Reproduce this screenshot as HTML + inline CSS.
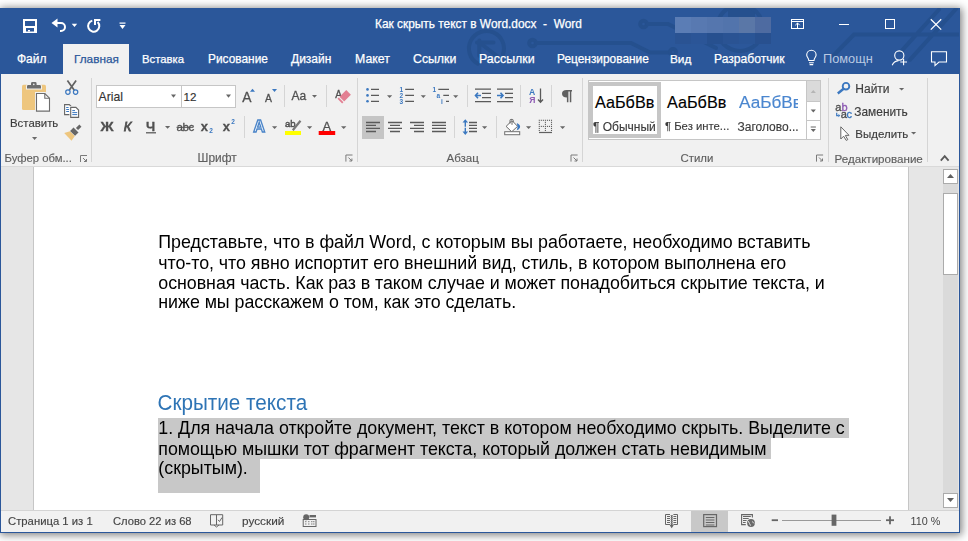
<!DOCTYPE html>
<html><head><meta charset="utf-8">
<style>
*{margin:0;padding:0;box-sizing:border-box}
html,body{width:968px;height:541px;overflow:hidden;background:#fff;font-family:"Liberation Sans",sans-serif;position:relative}
.a{position:absolute}
.t{position:absolute;white-space:nowrap;line-height:1}
.tab{position:absolute;color:#fff;font-size:12px;white-space:nowrap;line-height:1;top:53px;-webkit-text-stroke:0.25px currentColor}
.sep{position:absolute;width:1px;background:#d5d5d5}
.gl{position:absolute;font-size:11.5px;color:#5e5e5e;-webkit-text-stroke:0.15px currentColor;white-space:nowrap;line-height:1;top:153px}
.rb{position:absolute;font-size:11.8px;color:#3c3c3c;-webkit-text-stroke:0.15px currentColor;white-space:nowrap;line-height:1}
.st{position:absolute;font-size:11.2px;color:#444;-webkit-text-stroke:0.15px currentColor;white-space:nowrap;line-height:1;top:516px}
.doc{position:absolute;font-size:17.84px;color:#000;white-space:nowrap;line-height:1}
svg{position:absolute;left:0;top:0}
</style></head><body><div id="root" style="position:absolute;left:0;top:0;width:968px;height:541px;filter:opacity(1)">
<!-- window shadow & frame -->
<div class="a" style="left:0;top:8px;width:960px;height:525px;background:#f1f1f1;box-shadow:1px 1px 8px 1px rgba(0,0,0,.5)"></div>
<!-- title bar + tabs -->
<div class="a" style="left:0;top:8px;width:960px;height:66px;background:#2b579a;overflow:hidden">
  <svg width="960" height="66" viewBox="0 8 960 66">
    <g fill="none" stroke="#25508e" stroke-width="4" stroke-linecap="round">
      <path d="M477.75 63.7 A17.5 17.5 0 1 1 502.9 54.5"/>
      <path d="M479.3 42.5 L497 56 M479.3 40.6 V55.8 M477 42.5 H493.5"/>
      <circle cx="532.5" cy="43" r="3.3"/>
      <path d="M536 43 H631 L650 52.5 H670"/>
      <circle cx="673" cy="52" r="3"/>
      <circle cx="643.5" cy="24" r="3.3"/>
      <path d="M647 24 H668 L716 48"/>
      <rect x="728" y="8" width="27" height="9" fill="#25508e" stroke="none"/>
      <circle cx="740" cy="28" r="23"/>
      <path d="M833 56 L854 34.5 H960 M900.7 51.9 L939 9.5 M909.9 59.8 L956 9"/>
    </g>
  </svg>
</div>
<div class="a" style="left:675px;top:17px;width:16px;height:16px;background:#5b7db5"></div><div class="a" style="left:675px;top:33px;width:16px;height:11px;background:#2a5393"></div><div class="a" style="left:691px;top:17px;width:16px;height:16px;background:#5879b1"></div><div class="a" style="left:691px;top:33px;width:16px;height:11px;background:#2b5597"></div><div class="a" style="left:707px;top:17px;width:16px;height:16px;background:#5576ae"></div><div class="a" style="left:707px;top:33px;width:16px;height:11px;background:#27508f"></div><div class="a" style="left:723px;top:17px;width:16px;height:16px;background:#5274ac"></div><div class="a" style="left:723px;top:33px;width:16px;height:11px;background:#2a5393"></div><div class="a" style="left:739px;top:17px;width:16px;height:16px;background:#5a77a7"></div><div class="a" style="left:739px;top:33px;width:16px;height:11px;background:#2a5596"></div><div class="a" style="left:755px;top:17px;width:16px;height:16px;background:#4e6ba1"></div><div class="a" style="left:755px;top:33px;width:16px;height:11px;background:#28508f"></div>
<!-- active tab -->
<div class="a" style="left:63px;top:44px;width:66px;height:30px;background:#f1f1f1"></div>
<!-- title -->
<div class="t" style="left:375px;top:19px;font-size:11.9px;color:#fff;-webkit-text-stroke:0.25px #fff">Как скрыть текст в Word.docx&nbsp; -&nbsp; Word</div>
<!-- tabs -->
<div class="tab" style="left:17px">Файл</div>
<div class="tab" style="top:53.6px;left:74px;color:#2b579a;font-size:11.8px">Главная</div>
<div class="tab" style="top:53.6px;left:142px;font-size:11.3px">Вставка</div>
<div class="tab" style="top:53.6px;left:208px;font-size:11.9px">Рисование</div>
<div class="tab" style="left:291px">Дизайн</div>
<div class="tab" style="left:355px;font-size:12.3px">Макет</div>
<div class="tab" style="left:413px;font-size:12.3px">Ссылки</div>
<div class="tab" style="left:479px;font-size:12.4px">Рассылки</div>
<div class="tab" style="top:53.6px;left:557px;font-size:11.9px">Рецензирование</div>
<div class="tab" style="top:53.6px;left:670px;font-size:11.8px">Вид</div>
<div class="tab" style="left:714px;font-size:12.1px">Разработчик</div>
<div class="tab" style="left:823px;color:#b9c9e2;font-size:12.8px;-webkit-text-stroke:0">Помощн</div>

<!-- ribbon bottom border -->
<div class="a" style="left:1px;top:166px;width:958px;height:1px;background:#d9d9d9"></div>
<!-- doc area -->
<div class="a" style="left:1px;top:167px;width:958px;height:343px;background:#e6e6e6"></div>
<div class="a" style="left:33px;top:167px;width:876px;height:343px;background:#fff;border-left:1px solid #c6c6c6;border-right:1px solid #c6c6c6"></div>
<!-- scrollbar -->
<div class="a" style="left:943px;top:184px;width:15px;height:309px;background:#dadada"></div>
<div class="a" style="left:943px;top:169px;width:15px;height:15px;background:#fff;border:1px solid #ababab"></div>
<div class="a" style="left:943px;top:193px;width:15px;height:82px;background:#fff;border:1px solid #ababab"></div>
<div class="a" style="left:943px;top:493px;width:15px;height:15px;background:#fff;border:1px solid #ababab"></div>
<!-- status bar -->
<div class="a" style="left:1px;top:510px;width:958px;height:1px;background:#d4d4d4"></div>
<div class="a" style="left:691px;top:511px;width:37px;height:21px;background:#c8c8c8"></div>
<!-- window blue border -->
<div class="a" style="left:0;top:8px;width:960px;height:525px;border:1px solid #2b579a;border-top:0"></div>
<!-- ribbon separators -->
<div class="sep" style="left:91px;top:78px;height:84px"></div>
<div class="sep" style="left:357px;top:78px;height:84px"></div>
<div class="sep" style="left:582px;top:78px;height:84px"></div>
<div class="sep" style="left:828px;top:78px;height:84px"></div>
<div class="sep" style="left:927px;top:78px;height:84px"></div>
<div class="sep" style="left:284px;top:85px;height:22px"></div>
<div class="sep" style="left:326px;top:85px;height:22px"></div>
<div class="sep" style="left:244px;top:116px;height:22px"></div>
<div class="sep" style="left:467px;top:85px;height:22px"></div>
<div class="sep" style="left:520px;top:85px;height:22px"></div>
<div class="sep" style="left:551px;top:85px;height:22px"></div>
<div class="sep" style="left:454px;top:116px;height:22px"></div>
<div class="sep" style="left:496px;top:116px;height:22px"></div>
<!-- font boxes -->
<div class="a" style="left:96px;top:85px;width:86px;height:23px;background:#fff;border:1px solid #c6c6c6"></div>
<div class="a" style="left:181px;top:85px;width:55px;height:23px;background:#fff;border:1px solid #c6c6c6"></div>
<div class="rb" style="left:98.5px;top:91px;font-size:12.2px;color:#333">Arial</div>
<div class="rb" style="left:183.5px;top:91px;font-size:11.6px;color:#333">12</div>
<!-- align left active -->
<div class="a" style="left:362px;top:116px;width:22px;height:23px;background:#c5c5c5"></div>
<!-- styles gallery -->
<div class="a" style="left:588px;top:80px;width:233px;height:60px;background:#fff;border:1px solid #c6c6c6"></div>
<div class="a" style="left:589px;top:82px;width:72px;height:56px;border:4px solid #c6c6c6"></div>
<div class="a" style="left:807px;top:81px;width:13px;height:20px;background:#dadada"></div>
<div class="a" style="left:806px;top:80px;width:1px;height:60px;background:#c6c6c6"></div>
<div class="a" style="left:806px;top:101px;width:15px;height:1px;background:#c6c6c6"></div>
<div class="a" style="left:806px;top:120px;width:15px;height:1px;background:#c6c6c6"></div>
<div class="rb" style="left:595px;top:93.8px;font-size:16.2px;color:#000">АаБбВв</div>
<div class="rb" style="left:667px;top:93.8px;font-size:16.2px;color:#000">АаБбВв</div>
<div class="a" style="left:739px;top:90px;width:59px;height:24px;overflow:hidden"><div class="rb" style="left:0;top:4px;font-size:17.2px;color:#4a86cf">АаБбВв</div></div>
<div class="rb" style="left:593px;top:121px;font-size:12px">¶ Обычный</div>
<div class="rb" style="left:665px;top:121px;font-size:11.3px">¶ Без инте...</div>
<div class="rb" style="left:737.5px;top:121px;font-size:12px">Заголово...</div>
<!-- labels -->
<div class="rb" style="left:10px;top:117.5px;font-size:11.4px">Вставить</div>
<div class="gl" style="left:4.5px;font-size:11.3px">Буфер обм...</div>
<div class="gl" style="left:197.5px;font-size:11.9px">Шрифт</div>
<div class="gl" style="left:446.5px;font-size:11.5px">Абзац</div>
<div class="gl" style="left:680.5px;font-size:11.4px">Стили</div>
<div class="gl" style="left:834.5px;font-size:11.6px">Редактирование</div>
<div class="rb" style="left:855.3px;top:83.3px;font-size:12px">Найти</div>
<div class="rb" style="left:854.3px;top:107px;font-size:11.9px">Заменить</div>
<div class="rb" style="left:855.3px;top:128.8px;font-size:11.5px">Выделить</div>
<!-- status bar text -->
<div class="st" style="left:8px;font-size:11.3px">Страница 1 из 1</div>
<div class="st" style="left:113px;font-size:11.2px">Слово 22 из 68</div>
<div class="st" style="left:242px;font-size:11.8px">русский</div>
<div class="st" style="left:910.5px;font-size:10.8px;-webkit-text-stroke:0">110 %</div>
<svg width="968" height="541" viewBox="0 0 968 541">
<!-- ===== title bar icons ===== -->
<g fill="#fff">
  <rect x="23" y="19" width="14" height="14"/>
</g>
<g fill="#2b579a">
  <rect x="25" y="21" width="10" height="5"/>
  <rect x="26" y="28" width="8" height="3.5"/>
</g>
<rect x="28" y="30" width="2" height="1.5" fill="#fff"/>
<g fill="none" stroke="#fff" stroke-width="2">
  <path d="M55 23 H61 A4 4 0 0 1 61 31 H60"/>
  <path d="M92.3 20.6 A5.6 5.6 0 1 0 97.6 22"/>
</g>
<g fill="#fff">
  <path d="M51.5 23 L57.5 18.6 V27.4 Z"/>
  <path d="M71.7 23.8 H77.2 L74.45 27 Z"/>
  <path d="M94 18.9 H100.4 V20.9 H96 V25 H94 Z"/>
  <rect x="119.5" y="22.5" width="6" height="1.2"/>
  <path d="M119.5 25 H125.5 L122.5 29 Z"/>
</g>
<g fill="none" stroke="#fff" stroke-width="1">
  <rect x="791.5" y="19.5" width="12" height="9"/>
  <path d="M791.5 21.5 H803.5 M797.5 28.5 V23 M795.3 25.2 L797.5 23 L799.7 25.2"/>
  <path d="M839 24.5 H849"/>
  <rect x="885.5" y="19.5" width="9" height="9"/>
  <path d="M930.8 19.2 L941.2 29.6 M941.2 19.2 L930.8 29.6" stroke-width="1.25"/>
</g>
<!-- tab row icons -->
<g fill="none" stroke="#fff" stroke-width="1.1">
  <path d="M808.8 60.5 C808.8 58 806.7 57 806.7 55 A4.7 4.7 0 0 1 816.1 55 C816.1 57 814 58 814 60.5 Z"/>
  <path d="M809 62.7 H813.8 M809.6 64.6 H813.2"/>
  <circle cx="899.3" cy="55.5" r="4.6"/>
  <path d="M892.2 65.3 A7.5 7.5 0 0 1 898.5 60.6"/>
  <path d="M903.6 58.8 V65.2 M900.3 62 H907"/>
  <path d="M931.5 51.8 H946.5 V62 H939 L935 65.6 V62 H931.5 Z"/>
</g>
<!-- ===== clipboard group ===== -->
<rect x="22" y="84.7" width="24" height="25.3" rx="1.6" fill="#eec67e"/>
<path d="M27 88.6 V86.3 Q27 85 28.3 85 H31 V83.5 Q31 82.1 32.4 82.1 H35.2 Q36.6 82.1 36.6 83.5 V85 H39.7 Q41 85 41 86.3 V88.6 Z" fill="#f1f1f1" stroke="#f1f1f1" stroke-width="2"/>
<path d="M27 88.6 V86.3 Q27 85 28.3 85 H31 V83.5 Q31 82.1 32.4 82.1 H35.2 Q36.6 82.1 36.6 83.5 V85 H39.7 Q41 85 41 86.3 V88.6 Z" fill="#6d6d6d"/>
<circle cx="33.8" cy="84.4" r="0.8" fill="#f1f1f1"/>
<path d="M36.5 93.5 H44.8 L49.5 98.2 V111.1 H36.5 Z" fill="#fff" stroke="#f1f1f1" stroke-width="3"/>
<path d="M36.5 93.5 H44.8 L49.5 98.2 V111.1 H36.5 Z" fill="#fff" stroke="#6d6d6d" stroke-width="1.1"/>
<path d="M44.8 93.5 V98.2 H49.5" fill="none" stroke="#6d6d6d" stroke-width="1.1"/>
<path d="M32 137 H37.2 L34.6 140 Z" fill="#6a6a6a"/>
<g stroke="#626262" stroke-width="1.7" fill="none">
  <path d="M67.4 80.5 L74.3 90.3 M76.1 80.5 L69.2 90.3"/>
</g>
<g stroke="#3b78c0" stroke-width="1.2" fill="none">
  <circle cx="67.9" cy="92.1" r="2.2"/>
  <circle cx="75.6" cy="92.1" r="2.2"/>
</g>
<g stroke="#666" stroke-width="1.1" fill="#fff">
  <path d="M64.6 104.6 H69.3 L71.5 106.8 V114.6 H64.6 Z"/>
</g>
<path d="M70.7 107.4 H75.9 L78.6 110.1 V117.4 H70.7 Z" fill="#fff" stroke="#f1f1f1" stroke-width="2.6"/>
<path d="M70.7 107.4 H75.9 L78.6 110.1 V117.4 H70.7 Z" fill="#fff" stroke="#666" stroke-width="1.1"/>
<g stroke="#3b78c0" stroke-width="1">
  <path d="M66.2 107.5 H68.6 M66.2 109.5 H69 M66.2 111.5 H69 M72.3 110.6 H75 M72.3 112.6 H77.2 M72.3 114.6 H77.2"/>
</g>
<path d="M64.2 133 L70.8 131 L75.2 135.4 L71.5 140.8 Z" fill="#eec67e"/>
<path d="M78.47 132.48 L73.52 127.53 L70.13 130.92 L75.08 135.87 Z" fill="#666" stroke="#f1f1f1" stroke-width="1"/>
<path d="M78.47 132.48 L73.52 127.53 L70.13 130.92 L75.08 135.87 Z" fill="#666"/>
<path d="M77 129 L80.4 125.6" stroke="#666" stroke-width="3"/>
<!-- launchers -->
<g fill="none" stroke="#7a7a7a" stroke-width="1">
  <path d="M80.5 162 V155.5 H87 M83 158 L86.5 161.5 M86.5 159 V161.5 H84"/>
  <path d="M345.9 161.6 V155 H352.5 M348.4 157.5 L351.9 161 M351.9 158.5 V161 H349.4"/>
  <path d="M571 161.6 V155 H577.6 M573.5 157.5 L577 161 M577 158.5 V161 H574.5"/>
  <path d="M816.5 161.6 V155 H823.1 M819 157.5 L822.5 161 M822.5 158.5 V161 H820"/>
</g>
<path d="M940.8 160.6 L944.7 156.2 L948.6 160.6" fill="none" stroke="#5a5a5a" stroke-width="1.8"/>
<!-- ===== font group ===== -->
<g fill="#676767">
  <path d="M171 94.5 H176 L173.5 97.8 Z"/>
  <path d="M226 94.5 H231 L228.5 97.8 Z"/>
  <path d="M312 95 H317 L314.5 97.8 Z"/>
  <path d="M165 126 H170.2 L167.6 128.8 Z"/>
  <path d="M272 126.2 H277.2 L274.6 129 Z"/>
  <path d="M307 126.2 H312.2 L309.6 129 Z"/>
  <path d="M341 126.2 H346.4 L343.7 129 Z"/>
</g>
<g font-family="Liberation Sans" fill="#505050" stroke="#505050" stroke-width="0.3">
  <text x="242.2" y="101.7" font-size="13.8">A</text>
  <text x="265" y="101.7" font-size="10.4">A</text>
  <text x="291.5" y="99.8" font-size="12" >Aa</text>
  <text x="335.2" y="98" font-size="10">A</text>
  <text x="100.6" y="131.4" font-size="13.4" font-weight="bold" transform="translate(100.6 0) scale(1.08 1) translate(-100.6 0)">Ж</text>
  <text x="123.8" y="131.4" font-size="13" font-style="italic" stroke-width="0.8">К</text>
  <text x="146" y="131.4" font-size="13" font-weight="bold">Ч</text>
  <text x="176.6" y="131" font-size="11.6" letter-spacing="-0.5">abc</text>
  <text x="200.8" y="131" font-size="13" font-weight="bold">x</text>
  <text x="222.8" y="131" font-size="13" font-weight="bold">x</text>
  <text x="285" y="126.5" font-size="9.5" stroke-width="0.5">ab</text>
  <text x="322.4" y="130.6" font-size="13">A</text>
</g>
<path d="M146 132.8 H156" stroke="#505050" stroke-width="1.2"/>
<path d="M176.5 127.3 H193.5" stroke="#505050" stroke-width="1"/>
<g fill="#3b78c0">
  <path d="M250 91.8 H255 L252.5 88.7 Z"/>
  <path d="M272 89 H277 L274.5 92.1 Z"/>
</g>
<g font-family="Liberation Sans" fill="#3b78c0" font-weight="bold">
  <text x="209.3" y="133.3" font-size="6.5">2</text>
  <text x="231.3" y="124" font-size="6.5">2</text>
</g>
<text x="253.2" y="132.3" font-family="Liberation Sans" font-size="16.5" font-weight="bold" fill="#f4f8fc" stroke="#4a84c8" stroke-width="1.3">A</text>
<path d="M350.9 94.75 L346.25 90.1 L337.5 98.85 L342.15 103.5 Z" fill="#e37f92"/>
<path d="M338.9 96.9 L344.1 102.1" stroke="#f1f1f1" stroke-width="1.1"/>
<path d="M292.8 130.2 L300.5 120.8" stroke="#777" stroke-width="2.2"/>
<rect x="285" y="131" width="16" height="4" fill="#ffff00"/>
<rect x="318.7" y="131" width="16.5" height="4" fill="#ff0000"/>
<!-- ===== paragraph group ===== -->
<g fill="#676767">
  <path d="M387 95.2 H392.2 L389.6 98 Z"/>
  <path d="M420.7 95.2 H425.9 L423.3 98 Z"/>
  <path d="M453.1 95.2 H458.3 L455.7 98 Z"/>
  <path d="M482 126.3 H487.2 L484.6 129 Z"/>
  <path d="M526 126.3 H531.2 L528.6 129 Z"/>
  <path d="M560 126.3 H565.2 L562.6 129 Z"/>
</g>
<g fill="#3b78c0">
  <circle cx="367.5" cy="89.4" r="1.3"/>
  <circle cx="367.5" cy="95.4" r="1.3"/>
  <circle cx="367.5" cy="101.3" r="1.3"/>
</g>
<g stroke="#5a5a5a" stroke-width="1.3">
  <path d="M371 89.4 H379 M371 95.4 H379 M371 101.3 H379"/>
  <path d="M405.2 89.4 H414 M405.2 95.4 H414 M405.2 101.3 H414"/>
  <path d="M438.3 89.4 H449 M443.3 95.4 H449 M446 101.3 H449"/>
  <path d="M475 89.2 H491 M482 93.4 H491 M482 97.6 H491 M475 101.6 H491"/>
  <path d="M497 89.2 H513 M505 93.4 H513 M505 97.6 H513 M497 101.6 H513"/>
  <path d="M540.5 88.5 V102 M538 99.5 L540.5 102.2 L543 99.5" fill="none"/>
  <path d="M366 122.5 H380 M366 125.4 H376 M366 128.4 H380 M366 131.5 H376"/>
  <path d="M388 122.5 H402 M390 125.4 H400 M388 128.4 H402 M390 131.5 H400"/>
  <path d="M410 122.5 H424 M414 125.4 H424 M410 128.4 H424 M414 131.5 H424"/>
  <path d="M432 122.5 H446 M432 125.4 H446 M432 128.4 H446 M432 131.5 H446"/>
  <path d="M469 122.5 H477 M469 125.3 H477 M469 128.4 H477 M469 131.5 H477"/>
</g>
<g font-family="Liberation Sans" font-weight="bold" fill="#3b78c0" font-size="6.5">
  <text x="399.5" y="92">1</text>
  <text x="399.5" y="98">2</text>
  <text x="399.5" y="104">3</text>
  <text x="432.5" y="92">1</text>
  <text x="436.5" y="98">a</text>
  <text x="441" y="104">i</text>
</g>
<g stroke="#3b78c0" stroke-width="1.6" fill="none">
  <path d="M475.5 95.5 H481 M478 92.8 L475.5 95.5 L478 98.2"/>
  <path d="M497 95.5 H503 M500.5 92.8 L503 95.5 L500.5 98.2"/>
  <path d="M465.3 121 V126.8 M465.3 127.8 V133.2" stroke-width="1.4"/></g><g fill="#3b78c0"><path d="M462.5 122.6 L465.3 119.2 L468.1 122.6 Z M462.5 131.6 L465.3 135 L468.1 131.6 Z"/>
</g>
<g font-family="Liberation Sans" font-weight="bold" font-size="8.6">
  <text x="529" y="94.7" fill="#3b78c0">A</text>
  <text x="529.3" y="102.5" fill="#8e5bb4">Я</text>
</g>
<path d="M566.5 90 H572 V91.5 H571.3 V102.3 H569.8 V91.5 H568.4 V102.3 H566.9 V97.4 Q562 97.2 562 93.7 Q562 90 566.5 90 Z" fill="#606060"/>
<!-- shading -->
<path d="M506.1 126.4 L512 120.6 L517.6 126.3 L511.7 131.8 Z" fill="#fff" stroke="#666" stroke-width="1"/>
<path d="M510 123.5 V120.4 Q510 119.4 511 119.4 H512.2 Q513.2 119.4 513.2 120.4 V122" fill="none" stroke="#666" stroke-width="1"/>
<path d="M512 121 V124.8" stroke="#666" stroke-width="1"/>
<path d="M516.8 122.9 Q520.8 124.5 520 127.5 Q519.3 129.5 516.8 130.3 Q518.3 126.5 516.8 122.9 Z" fill="#3b78c0"/>
<rect x="504.7" y="131.7" width="15" height="3" fill="#fff" stroke="#707070" stroke-width="1"/>
<!-- borders -->
<g fill="#5a5a5a"><rect x="538.75" y="119.75" width="1.1" height="1.1"/><rect x="540.78" y="119.75" width="1.1" height="1.1"/><rect x="542.82" y="119.75" width="1.1" height="1.1"/><rect x="544.85" y="119.75" width="1.1" height="1.1"/><rect x="546.88" y="119.75" width="1.1" height="1.1"/><rect x="548.91" y="119.75" width="1.1" height="1.1"/><rect x="550.95" y="119.75" width="1.1" height="1.1"/><rect x="538.75" y="121.78" width="1.1" height="1.1"/><rect x="544.85" y="121.78" width="1.1" height="1.1"/><rect x="550.95" y="121.78" width="1.1" height="1.1"/><rect x="538.75" y="123.82" width="1.1" height="1.1"/><rect x="544.85" y="123.82" width="1.1" height="1.1"/><rect x="550.95" y="123.82" width="1.1" height="1.1"/><rect x="538.75" y="125.85" width="1.1" height="1.1"/><rect x="540.78" y="125.85" width="1.1" height="1.1"/><rect x="542.82" y="125.85" width="1.1" height="1.1"/><rect x="544.85" y="125.85" width="1.1" height="1.1"/><rect x="546.88" y="125.85" width="1.1" height="1.1"/><rect x="548.91" y="125.85" width="1.1" height="1.1"/><rect x="550.95" y="125.85" width="1.1" height="1.1"/><rect x="538.75" y="127.88" width="1.1" height="1.1"/><rect x="544.85" y="127.88" width="1.1" height="1.1"/><rect x="550.95" y="127.88" width="1.1" height="1.1"/><rect x="538.75" y="129.92" width="1.1" height="1.1"/><rect x="544.85" y="129.92" width="1.1" height="1.1"/><rect x="550.95" y="129.92" width="1.1" height="1.1"/></g>
<path d="M539 132.5 H552" stroke="#606060" stroke-width="1.2"/>
<!-- styles scroll arrows -->
<path d="M810.7 93 H815.9 L813.3 90 Z" fill="#b5b5b5"/>
<path d="M810.7 109.5 H815.9 L813.3 112.5 Z" fill="#666"/>
<path d="M810.7 127 H815.9" stroke="#666" stroke-width="1"/>
<path d="M810.7 129 H815.9 L813.3 132 Z" fill="#666"/>
<!-- editing -->
<circle cx="846" cy="86.2" r="3.3" fill="none" stroke="#3b78c0" stroke-width="1.9"/>
<path d="M843.6 88.8 L837.8 93.5" stroke="#3b78c0" stroke-width="2.4"/>
<path d="M899 88 H904.2 L901.6 90.6 Z" fill="#676767"/>
<path d="M911 132 H916.2 L913.6 134.6 Z" fill="#676767"/>
<g font-family="Liberation Sans" font-size="11" stroke-width="0.35">
  <text x="835.3" y="110.8" fill="#505050" stroke="#505050">a</text>
  <text x="841.4" y="110.8" fill="#8e5bb4" stroke="#8e5bb4">b</text>
  <text x="840.8" y="117.9" fill="#505050" stroke="#505050">a</text>
  <text x="846.4" y="117.9" fill="#3b78c0" stroke="#3b78c0">c</text>
</g>
<path d="M836.7 112.8 V115.6 H838.6" stroke="#3b78c0" stroke-width="1.2" fill="none"/>
<path d="M838.4 113.9 L840.3 115.6 L838.4 117.3 Z" fill="#3b78c0"/>
<path d="M840.8 126.8 V139 L843.6 136.2 L846.2 140.4 L847.8 139.6 L845.3 135.4 L849 135.3 Z" fill="#fff" stroke="#666" stroke-width="1"/>
<!-- ===== scrollbar arrows ===== -->
<path d="M947 178 H954 L950.5 174 Z" fill="#606060"/>
<path d="M947 498 H954 L950.5 502 Z" fill="#606060"/>
<!-- ===== status bar icons ===== -->
<g fill="none" stroke="#666" stroke-width="1">
  <path d="M210.5 514.7 H216.5 V525 H210.5 Z M216.5 514.7 H222.7 V525 H216.5 Z"/>
  <path d="M214 525 L216.5 527 L219 525"/>
  <path d="M218 519.8 L219.5 521.5 L222 517.5"/>
  <path d="M670 514.5 H665.5 V524.5 H670 M673.4 514.5 H677.5 V524.5 H673.4"/>
  <path d="M667 516.5 H670 M667 518.5 H670 M667 520.5 H670 M667 522.5 H670 M673.4 516.5 H676.3 M673.4 518.5 H676.3 M673.4 520.5 H676.3 M673.4 522.5 H676.3"/>
  <path d="M671.7 515 V526 M670.3 524.8 L671.7 527 L673.1 524.8" stroke-width="1.4"/>
  <path d="M670.5 515.5 H673 M670.5 517.5 H673 M670.5 519.5 H673 M670.5 521.5 H673 M670.5 523.5 H673" stroke="#888" stroke-width="0.8"/>
</g>
<g fill="none" stroke="#666" stroke-width="1.2">
  <rect x="703.7" y="514.6" width="12.8" height="12"/>
  <path d="M705.8 517.5 H714.4 M705.8 520 H714.4 M705.8 522.5 H714.4 M705.8 525 H714.4"/>
  <path d="M745.8 524.6 H741.6 V514.6 H752.4 V517.6" stroke-width="1.1"/>
  <path d="M743 516.5 H750.8 M743 518.5 H748.7 M743 520.5 H746.6 M743 522.5 H745.7" stroke-width="1.1"/>
</g>
<circle cx="751" cy="523" r="4.6" fill="#f1f1f1"/><circle cx="751" cy="523" r="3.9" fill="#6a6a6a"/>
<path d="M748.3 521.2 Q749.5 523.5 750.6 525.6 M752.2 521.6 Q753.2 522.2 754 523.4" stroke="#e8e8e8" stroke-width="1" fill="none"/>
<g fill="#666">
  <circle cx="306.2" cy="517.3" r="3"/>
  <rect x="309.5" y="515" width="6.5" height="2.4"/>
  <rect x="303.2" y="519.5" width="12.8" height="7" fill="none" stroke="#666" stroke-width="1"/>
  <rect x="305.2" y="521.2" width="1.2" height="1"/><rect x="308.2" y="521.2" width="1.2" height="1"/><rect x="311.2" y="521.2" width="1.2" height="1"/><rect x="313.2" y="521.2" width="1.2" height="1"/>
  <rect x="305.2" y="523.5" width="1.2" height="1"/><rect x="308.2" y="523.5" width="1.2" height="1"/><rect x="311.2" y="523.5" width="1.2" height="1"/><rect x="313.2" y="523.5" width="1.2" height="1"/>
  <rect x="771.7" y="519.3" width="6.3" height="1.8"/>
  <rect x="886" y="519.3" width="8" height="1.8"/>
  <rect x="889.1" y="516.3" width="1.8" height="8"/>
  <rect x="782" y="520" width="99" height="1" fill="#999"/>
  <rect x="831.6" y="514.6" width="4.8" height="11.2"/>
</g>
</svg>
<!-- document text -->
<div class="doc" style="left:158.3px;top:234px">Представьте, что в файл Word, с которым вы работаете, необходимо вставить</div>
<div class="doc" style="left:158.3px;top:255px;letter-spacing:-0.04px">что-то, что явно испортит его внешний вид, стиль, в котором выполнена его</div>
<div class="doc" style="left:158.3px;top:275px;letter-spacing:-0.054px">основная часть. Как раз в таком случае и может понадобиться скрытие текста, и</div>
<div class="doc" style="left:158.3px;top:294px;letter-spacing:-0.047px">ниже мы расскажем о том, как это сделать.</div>
<div class="doc" style="left:157.5px;top:392.8px;font-size:20.68px;color:#2e74b5;transform:scaleY(1.08);transform-origin:0 17px">Скрытие текста</div>
<div class="a" style="left:158px;top:418px;width:691px;height:20px;background:#c8c8c8"></div>
<div class="a" style="left:158px;top:438px;width:613px;height:21px;background:#c8c8c8"></div>
<div class="a" style="left:158px;top:458px;width:102px;height:35px;background:#c8c8c8"></div>
<div class="doc" style="left:158.3px;top:420px;letter-spacing:-0.01px">1. Для начала откройте документ, текст в котором необходимо скрыть. Выделите с</div>
<div class="doc" style="left:158.3px;top:440.5px;letter-spacing:-0.044px">помощью мышки тот фрагмент текста, который должен стать невидимым</div>
<div class="doc" style="left:158.3px;top:460px">(скрытым).</div>
</div></body></html>
